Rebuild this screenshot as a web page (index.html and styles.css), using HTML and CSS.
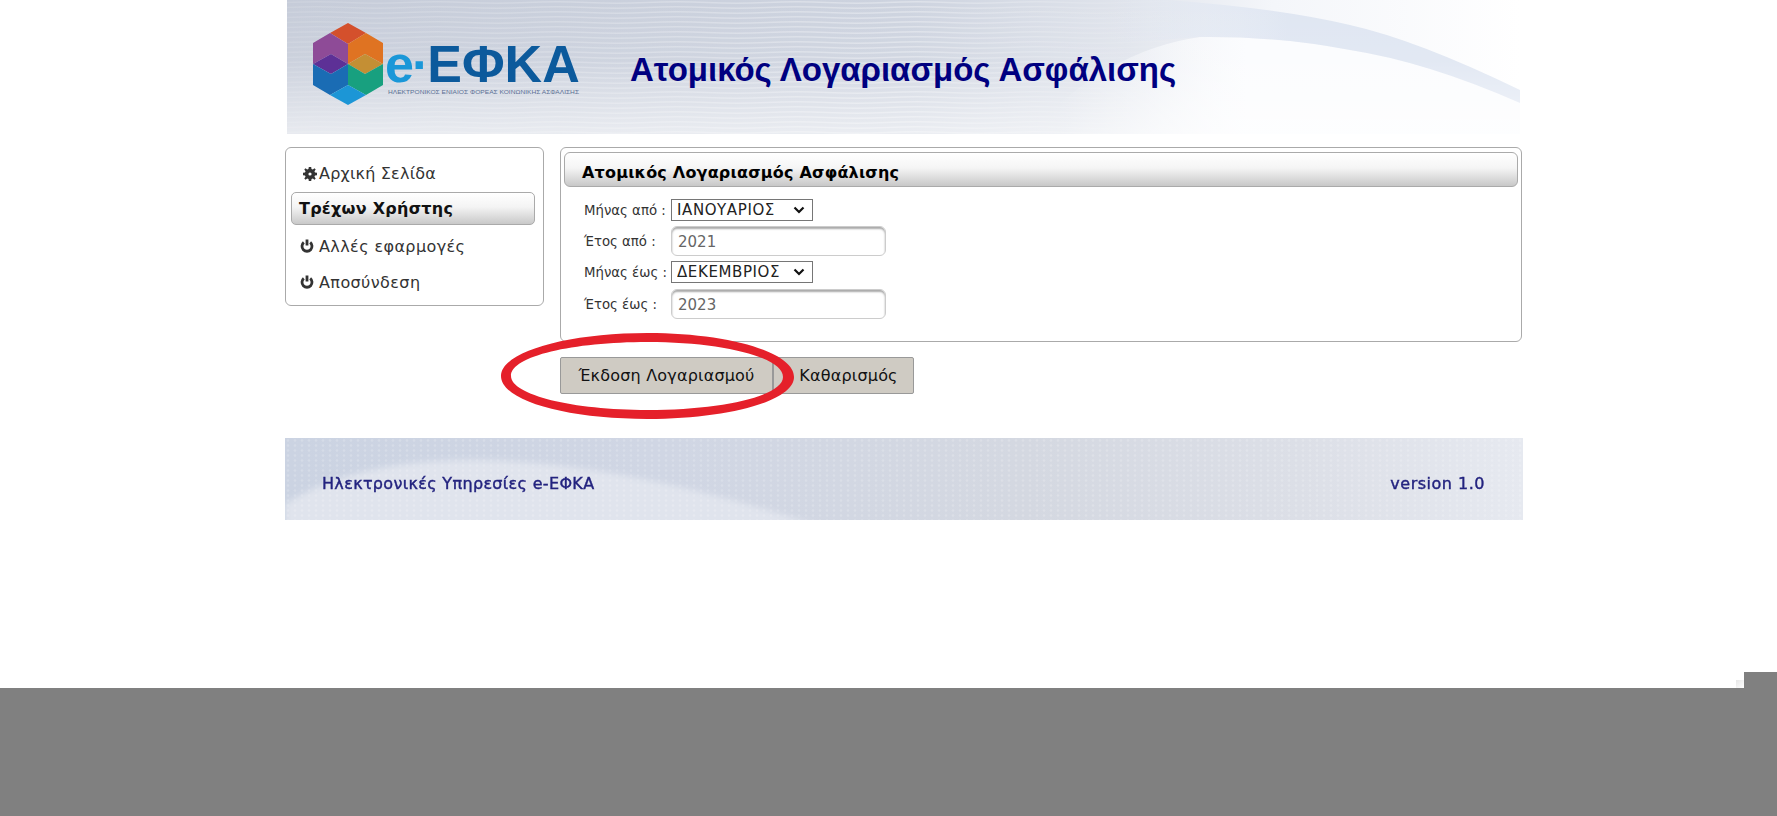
FILE: index.html
```html
<!DOCTYPE html>
<html lang="el">
<head>
<meta charset="utf-8">
<title>Ατομικός Λογαριασμός Ασφάλισης</title>
<link rel="stylesheet" href="styles.css">
</head>
<body>
<div class="page">
  <div class="content">
    <header class="site-header">
      <svg class="art" viewBox="0 0 1233 134" preserveAspectRatio="none" aria-hidden="true">
        <defs>
          <linearGradient id="hb" x1="0" x2="1" y1="0" y2="0">
            <stop offset="0" stop-color="#c6ccd9"/>
            <stop offset=".5" stop-color="#cdd3df"/>
            <stop offset=".68" stop-color="#e0e4ec"/>
            <stop offset=".8" stop-color="#f4f6fa"/>
            <stop offset="1" stop-color="#ffffff"/>
          </linearGradient>
          <linearGradient id="hv" x1="0" x2="0" y1="0" y2="1">
            <stop offset="0" stop-color="#fff" stop-opacity="0"/>
            <stop offset=".45" stop-color="#fff" stop-opacity=".1"/>
            <stop offset="1" stop-color="#fff" stop-opacity=".6"/>
          </linearGradient>
          <linearGradient id="hs" gradientUnits="userSpaceOnUse" x1="820" x2="1000" y1="0" y2="0">
            <stop offset="0" stop-color="#dfe6f2" stop-opacity="0"/>
            <stop offset="1" stop-color="#dfe6f2"/>
          </linearGradient>
          <linearGradient id="hl" gradientUnits="userSpaceOnUse" x1="770" x2="960" y1="0" y2="0">
            <stop offset="0" stop-color="#fbfcfe" stop-opacity="0"/>
            <stop offset="1" stop-color="#fbfcfe"/>
          </linearGradient>
          <pattern id="hw" width="120" height="5" patternUnits="userSpaceOnUse">
            <path d="M0 2.5Q30 1 60 2.5T120 2.5" fill="none" stroke="#fff" stroke-opacity=".34" stroke-width="1.6"/>
          </pattern>
          <linearGradient id="hm" x1="0" x2="1" y1="0" y2="0">
            <stop offset="0" stop-color="#fff" stop-opacity=".35"/>
            <stop offset=".5" stop-color="#fff" stop-opacity="1"/>
            <stop offset=".75" stop-color="#fff" stop-opacity="0"/>
          </linearGradient>
          <mask id="hmask"><rect width="1233" height="134" fill="url(#hm)"/></mask>
        </defs>
        <rect width="1233" height="134" fill="url(#hb)"/>
        <path d="M740 134Q820 50 913 37Q990 36 1063 50Q1140 62 1233 103V134Z" fill="url(#hl)"/>
        <path d="M820 0H880Q990 8 1063 25Q1130 40 1233 90V103Q1140 62 1063 50Q990 36 913 37L820 44Z" fill="url(#hs)"/>
        <rect width="1233" height="134" fill="url(#hv)"/>
        <rect width="1233" height="134" fill="url(#hw)" mask="url(#hmask)"/>
      </svg>
      <svg class="logo" viewBox="0 0 300 134" role="img" aria-label="e-ΕΦΚΑ">
        <g class="logo-hex">
          <polygon points="61,23 79,33 61,44 43,33" fill="#d4502c"/>
          <polygon points="26,43 43,33 61,44 61,64 44,54 26,64" fill="#8e4b97"/>
          <polygon points="61,44 79,33 96,43 96,64 78,54 61,64" fill="#df7322"/>
          <polygon points="26,64 44,54 61,64 44,74" fill="#5d3096"/>
          <polygon points="61,64 78,54 96,64 78,74" fill="#c48f34"/>
          <polygon points="26,64 44,74 61,64 61,85 43,95 26,85" fill="#1a6cb4"/>
          <polygon points="61,64 78,74 96,64 96,85 79,95 61,85" fill="#18a07f"/>
          <polygon points="61,85 79,95 61,105 43,95" fill="#1c96d6"/>
        </g>
        <text class="logo-word" x="98" y="82"><tspan class="logo-e">e·</tspan>ΕΦΚΑ</text>
        <text class="logo-tag" x="101" y="94" textLength="191" lengthAdjust="spacingAndGlyphs">ΗΛΕΚΤΡΟΝΙΚΟΣ ΕΝΙΑΙΟΣ ΦΟΡΕΑΣ ΚΟΙΝΩΝΙΚΗΣ ΑΣΦΑΛΙΣΗΣ</text>
      </svg>
      <h1 class="site-title">Ατομικός Λογαριασμός Ασφάλισης</h1>
    </header>

    <div class="columns">
      <nav class="sidebar">
        <a class="menu-item menu-home">
          <svg class="icon icon-gear" viewBox="0 0 14 14" aria-hidden="true">
            <path d="M5.8 0h2.4l.3 2 1.3.55L11.5 1.3l1.2 1.2-1.25 1.65.55 1.3 2 .35v2.4l-2 .3-.55 1.3 1.25 1.7-1.2 1.2-1.65-1.25-1.3.55-.35 2H5.8l-.3-2-1.3-.55-1.7 1.25-1.2-1.2 1.25-1.65-.55-1.3-2-.35V5.8l2-.3.55-1.3L1.3 2.5l1.2-1.2 1.65 1.25 1.3-.55zM7 5.4a1.6 1.6 0 1 0 0 3.2 1.6 1.6 0 0 0 0-3.2z" fill="#333" fill-rule="evenodd"/>
          </svg>
          Αρχική Σελίδα
        </a>
        <a class="menu-item menu-active">Τρέχων Χρήστης</a>
        <a class="menu-item">
          <svg class="icon" viewBox="0 0 14 14" aria-hidden="true">
            <path d="M3.800 3.400a5 5 0 1 0 6.400 0" fill="none" stroke="#333" stroke-width="2.800"/>
            <path d="M7 0.500v6" fill="none" stroke="#333" stroke-width="2.800"/>
          </svg>
          Αλλές εφαρμογές
        </a>
        <a class="menu-item">
          <svg class="icon" viewBox="0 0 14 14" aria-hidden="true">
            <path d="M3.800 3.400a5 5 0 1 0 6.400 0" fill="none" stroke="#333" stroke-width="2.800"/>
            <path d="M7 0.500v6" fill="none" stroke="#333" stroke-width="2.800"/>
          </svg>
          Αποσύνδεση
        </a>
      </nav>

      <main class="main-col">
        <section class="panel">
          <h2 class="panel-title">Ατομικός Λογαριασμός Ασφάλισης</h2>
          <form class="form-grid">
            <label class="field-label">Μήνας από :</label>
            <select class="field-select"><option>ΙΑΝΟΥΑΡΙΟΣ</option></select>
            <label class="field-label">Έτος από :</label>
            <input class="field-input" type="text" value="2021">
            <label class="field-label">Μήνας έως :</label>
            <select class="field-select"><option>ΔΕΚΕΜΒΡΙΟΣ</option></select>
            <label class="field-label">Έτος έως :</label>
            <input class="field-input" type="text" value="2023">
          </form>
        </section>
        <div class="actions">
          <button class="btn btn-issue" type="button">Έκδοση Λογαριασμού</button>
          <button class="btn btn-clear" type="button">Καθαρισμός</button>
          <svg class="highlight" viewBox="0 0 293 86" aria-hidden="true">
            <path d="M146.500 0C227 0 293 19 293 44C293 68 227 86 146.500 86C66 86 0 68 0 43C0 19 66 0 146.500 0ZM146.500 9C72 9 10 23 10 43C10 62 72 77 146.500 77C221 77 282 63 282 44C282 24 221 9 146.500 9Z" fill="#e5202a" fill-rule="evenodd"/>
          </svg>
        </div>
      </main>
    </div>

    <footer class="site-footer">
      <svg class="art" viewBox="0 0 1238 82" preserveAspectRatio="none" aria-hidden="true">
        <defs>
          <linearGradient id="fb" x1="0" x2="1" y1="0" y2="0">
            <stop offset="0" stop-color="#cbd3e2"/>
            <stop offset=".3" stop-color="#d0d6e4"/>
            <stop offset=".6" stop-color="#d4d8e1"/>
            <stop offset=".82" stop-color="#dcdfe7"/>
            <stop offset="1" stop-color="#e6e9f0"/>
          </linearGradient>
          <pattern id="fw" width="7" height="5" patternUnits="userSpaceOnUse">
            <circle cx="3" cy="2.500" r="1.300" fill="#fff" fill-opacity=".18"/>
          </pattern>
          <filter id="soft" x="-5%" y="-20%" width="110%" height="140%"><feGaussianBlur stdDeviation="3"/></filter>
        </defs>
        <rect width="1238" height="82" fill="url(#fb)"/>
        <path d="M0 90V66Q70 22 190 22Q340 24 540 90Z" fill="#e0e4ed" filter="url(#soft)"/>
        <rect width="1238" height="82" fill="url(#fw)"/>
      </svg>
      <span class="footer-text footer-left">Ηλεκτρονικές Υπηρεσίες e-ΕΦΚΑ</span>
      <span class="footer-text footer-right">version 1.0</span>
    </footer>
  </div>
  <div class="taskbar"><div class="taskbar-corner"></div></div>
</div>
</body>
</html>
```

FILE: styles.css
```css
* { box-sizing: border-box; }
html, body { margin: 0; padding: 0; background: #fff; }
body { font-family: "DejaVu Sans", Verdana, sans-serif; overflow: hidden; }

.page { height: 816px; display: flex; flex-direction: column; }
.content { flex: 1; width: 1238px; margin-left: 285px; }

.site-header {
  position: relative;
  width: 1233px;
  height: 134px;
  margin-left: 2px;
  display: flex;
  align-items: center;
}
.art { position: absolute; left: 0; top: 0; width: 100%; height: 100%; display: block; }
.logo { position: relative; flex: none; width: 300px; height: 134px; margin-right: 43px; }
.logo-hex { filter: blur(.5px); }
.logo-word { font: bold 52px "Liberation Sans", Arial, sans-serif; fill: #0c5a9c; }
.logo-e { fill: #1a97d8; letter-spacing: -2px; }
.logo-tag { font: 6px "Liberation Sans", Arial, sans-serif; fill: #5a6f94; }
.site-title {
  position: relative;
  margin: 6px 0 0;
  font: bold 33px "Liberation Sans", Arial, sans-serif;
  color: #000080;
  white-space: nowrap;
}

.columns { display: flex; gap: 16px; margin-top: 13px; align-items: flex-start; }

.sidebar {
  width: 259px;
  height: 159px;
  flex: none;
  padding: 7px 8px 0 5px;
  border: 1px solid #aaa;
  border-radius: 6px;
  background: #fff;
}
.menu-item {
  display: flex;
  align-items: center;
  height: 36px;
  color: #333;
  font-size: 16px;
  letter-spacing: .4px;
  white-space: nowrap;
  padding-left: 9px;
  gap: 5px;
}
.menu-home { height: 37px; padding-left: 12px; gap: 2px; letter-spacing: .2px; }
.menu-active {
  height: 33px;
  margin-bottom: 3px;
  padding: 0 0 1px 7px;
  font-weight: bold;
  letter-spacing: .25px;
  color: #111;
  border: 1px solid #aaa;
  border-radius: 5px;
  background: linear-gradient(#fff 0%, #f4f4f4 45%, #c9c9c9 100%);
}
.icon { width: 14px; height: 14px; flex: none; }

.main-col { flex: none; width: 962px; }
.panel {
  height: 195px;
  padding: 4px 3px 0;
  border: 1px solid #aaa;
  border-radius: 6px;
  background: #fff;
}
.panel-title {
  margin: 0;
  height: 35px;
  line-height: 29px;
  padding: 5px 0 0 17px;
  font-size: 16px;
  letter-spacing: .2px;
  font-weight: bold;
  color: #000;
  border: 1px solid #aaa;
  border-radius: 6px;
  background: linear-gradient(#fff 0%, #f5f5f5 45%, #c8c8c8 100%);
}
.form-grid {
  display: grid;
  grid-template-columns: 87px 215px;
  grid-template-rows: 22px 30px 23px 30px;
  row-gap: 5px;
  margin: 12px 0 0 20px;
}
.field-label { font-size: 13.3px; color: #333; white-space: nowrap; align-self: center; }
.field-select {
  appearance: none;
  width: 142px;
  height: 22px;
  padding: 0 0 0 5px;
  border: 1px solid #767676;
  border-radius: 0;
  color: #222;
  font: 15px "DejaVu Sans", Verdana, sans-serif;
  letter-spacing: .6px;
  background: #fff url("data:image/svg+xml,%3Csvg xmlns='http://www.w3.org/2000/svg' width='12' height='8'%3E%3Cpath d='M1.5 1.500L6 6L10.500 1.500' fill='none' stroke='%23111' stroke-width='2.200'/%3E%3C/svg%3E") no-repeat right 7px center;
}
.field-input {
  width: 215px;
  height: 30px;
  padding: 2px 6px 0;
  border: 1px solid #ccc;
  border-radius: 6px;
  box-shadow: inset 0 2px 2px #a9a9a9;
  background: #fff;
  color: #666;
  font: 15px "DejaVu Sans", Verdana, sans-serif;
}

.actions { position: relative; display: flex; margin-top: 15px; height: 37px; }
.btn {
  height: 37px;
  padding: 0;
  border: 1px solid #999;
  border-radius: 2px;
  background: #cfcbc3;
  color: #111;
  font: 16px "DejaVu Sans", Verdana, sans-serif;
  letter-spacing: .2px;
}
.btn-issue { width: 213px; }
.btn-clear { width: 141px; padding-left: 10px; }
.highlight { position: absolute; left: -59px; top: -24px; width: 293px; height: 86px; }

.site-footer {
  position: relative;
  height: 82px;
  margin-top: 44px;
  padding: 9px 38px 0 37px;
  display: flex;
  align-items: center;
  justify-content: space-between;
}
.footer-text {
  position: relative;
  font-size: 16px;
  color: #23237f;
  white-space: nowrap;
  -webkit-text-stroke: .4px #23237f;
  filter: blur(.3px);
}
.footer-left { letter-spacing: .33px; }
.footer-right { letter-spacing: .5px; }

.taskbar { position: relative; height: 128px; background: #808080; flex: none; }
.taskbar-corner { position: absolute; right: 0; top: -16px; width: 33px; height: 16px; background: #808080; }
.taskbar-corner::before {
  content: "";
  position: absolute;
  left: -8px;
  top: 8px;
  width: 8px;
  height: 8px;
  background: linear-gradient(135deg, #e6e6e6, #fff);
}
```
